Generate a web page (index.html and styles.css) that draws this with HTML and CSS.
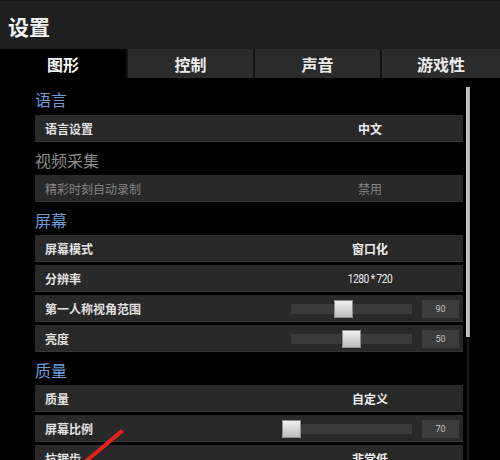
FILE: index.html
```html
<!DOCTYPE html>
<html>
<head>
  <meta charset="utf-8">
  <title>设置</title>
  <link rel="stylesheet" href="styles.css">
</head>
<body>
  <div class="titlebar">
    <h1>设置</h1>
  </div>
  <div class="tabs">
    <div class="tab active">图形</div>
    <div class="tab">控制</div>
    <div class="tab">声音</div>
    <div class="tab wide">游戏性</div>
  </div>
  <div class="content">
    <div class="list">
      <h2 class="section first">语言</h2>
      <div class="row">
        <span class="label">语言设置</span>
        <span class="val">中文</span>
      </div>

      <h2 class="section off">视频采集</h2>
      <div class="row off">
        <span class="label">精彩时刻自动录制</span>
        <span class="val">禁用</span>
      </div>

      <h2 class="section">屏幕</h2>
      <div class="row">
        <span class="label">屏幕模式</span>
        <span class="val">窗口化</span>
      </div>
      <div class="row">
        <span class="label">分辨率</span>
        <span class="val num">1280 * 720</span>
      </div>
      <div class="row">
        <span class="label">第一人称视角范围</span>
        <div class="track"><div class="thumb" style="left: 43px"></div></div>
        <span class="box">90</span>
      </div>
      <div class="row">
        <span class="label">亮度</span>
        <div class="track"><div class="thumb" style="left: 51px"></div></div>
        <span class="box">50</span>
      </div>

      <h2 class="section">质量</h2>
      <div class="row">
        <span class="label">质量</span>
        <span class="val">自定义</span>
      </div>
      <div class="row">
        <span class="label">屏幕比例</span>
        <div class="track"><div class="thumb" style="left: -9px"></div></div>
        <span class="box">70</span>
      </div>
      <div class="row">
        <span class="label">抗锯齿</span>
        <span class="val">非常低</span>
      </div>
    </div>
    <div class="scroll">
      <div class="scroll-thumb"></div>
    </div>
  </div>

  <svg class="arrow" width="500" height="460" viewBox="0 0 500 460">
    <polygon points="121,429 124,432 88,462 82,462" fill="#e3211d"/>
  </svg>
</body>
</html>
```

FILE: styles.css
```css
body {
  margin: 0;
  width: 500px;
  height: 460px;
  overflow: hidden;
  background-color: #000;
  color: #e6e6e6;
  font-family: "Noto Sans CJK SC", "Noto Sans", sans-serif;
  position: relative;
}

.titlebar {
  height: 48px;
  background-color: #1f1f1f;
  border-top: 1px solid #161616;
  display: flex;
  align-items: center;
  padding-left: 8px;
}

.titlebar h1 {
  margin: 0;
  font-size: 21px;
  font-weight: bold;
  color: #f2f2f2;
  line-height: 1;
  margin-top: 2px;
}

.tabs {
  display: flex;
  gap: 2px;
  height: 29px;
  background-color: #121212;
}

.tab {
  width: 125px;
  display: flex;
  align-items: center;
  justify-content: center;
  background-color: #2b2b2b;
  font-size: 16px;
  font-weight: bold;
  color: #ececec;
}

.tab.active {
  width: 126px;
  background-color: #000;
  color: #f4f4f4;
}

.tab.wide {
  flex: 1;
}

.content {
  display: flex;
}

.list {
  margin-left: 35px;
  width: 428px;
}

.section {
  margin: 0;
  height: 30px;
  box-sizing: border-box;
  padding-top: 7px;
  font-size: 16px;
  line-height: 16px;
  font-weight: normal;
  color: #6c9dd8;
}

.section.first {
  height: 37px;
  padding-top: 13px;
}

.section.off {
  color: #8c8c8c;
}

.row {
  height: 27px;
  margin-bottom: 3px;
  display: flex;
  align-items: center;
  background-color: #292929;
  box-shadow: inset 0 -1px #353535;
  font-size: 12px;
  font-weight: bold;
}

.row .label {
  flex: 1;
  padding-left: 10px;
  color: #e2e2e2;
}

.row .val {
  width: 130px;
  margin-right: 28px;
  text-align: center;
  color: #ececec;
}

.row .val.num {
  font-family: "Roboto", sans-serif;
  font-weight: normal;
  font-size: 12px;
  letter-spacing: -0.6px;
  transform: scaleX(0.85);
}

.row.off .label,
.row.off .val {
  color: #858585;
  font-weight: normal;
}

.track {
  position: relative;
  width: 121px;
  height: 10px;
  margin-right: 10px;
  background-color: #3b3b3b;
}

.thumb {
  position: absolute;
  top: -4px;
  width: 19px;
  height: 18px;
  box-sizing: border-box;
  border: 1px solid #8e8e8e;
  background: linear-gradient(#f0f0f0, #bdbdbd);
}

.box {
  width: 37px;
  height: 18px;
  margin-right: 4px;
  display: flex;
  align-items: center;
  justify-content: center;
  background-color: #3c3c3c;
  font-family: "Roboto", sans-serif;
  font-size: 9px;
  font-weight: normal;
  color: #c4c4c4;
}

.scroll {
  margin-left: 3px;
  width: 4px;
  display: flex;
  flex-direction: column;
}

.scroll-thumb {
  margin-top: 9px;
  height: 250px;
  background: linear-gradient(90deg, #d0d0d0, #a8a8a8);
}

.scroll::after {
  content: "";
  display: block;
  flex: 1;
  width: 2px;
  margin-left: 1px;
  background-color: #161616;
}

.arrow {
  position: absolute;
  left: 0;
  top: 0;
  pointer-events: none;
}
```
